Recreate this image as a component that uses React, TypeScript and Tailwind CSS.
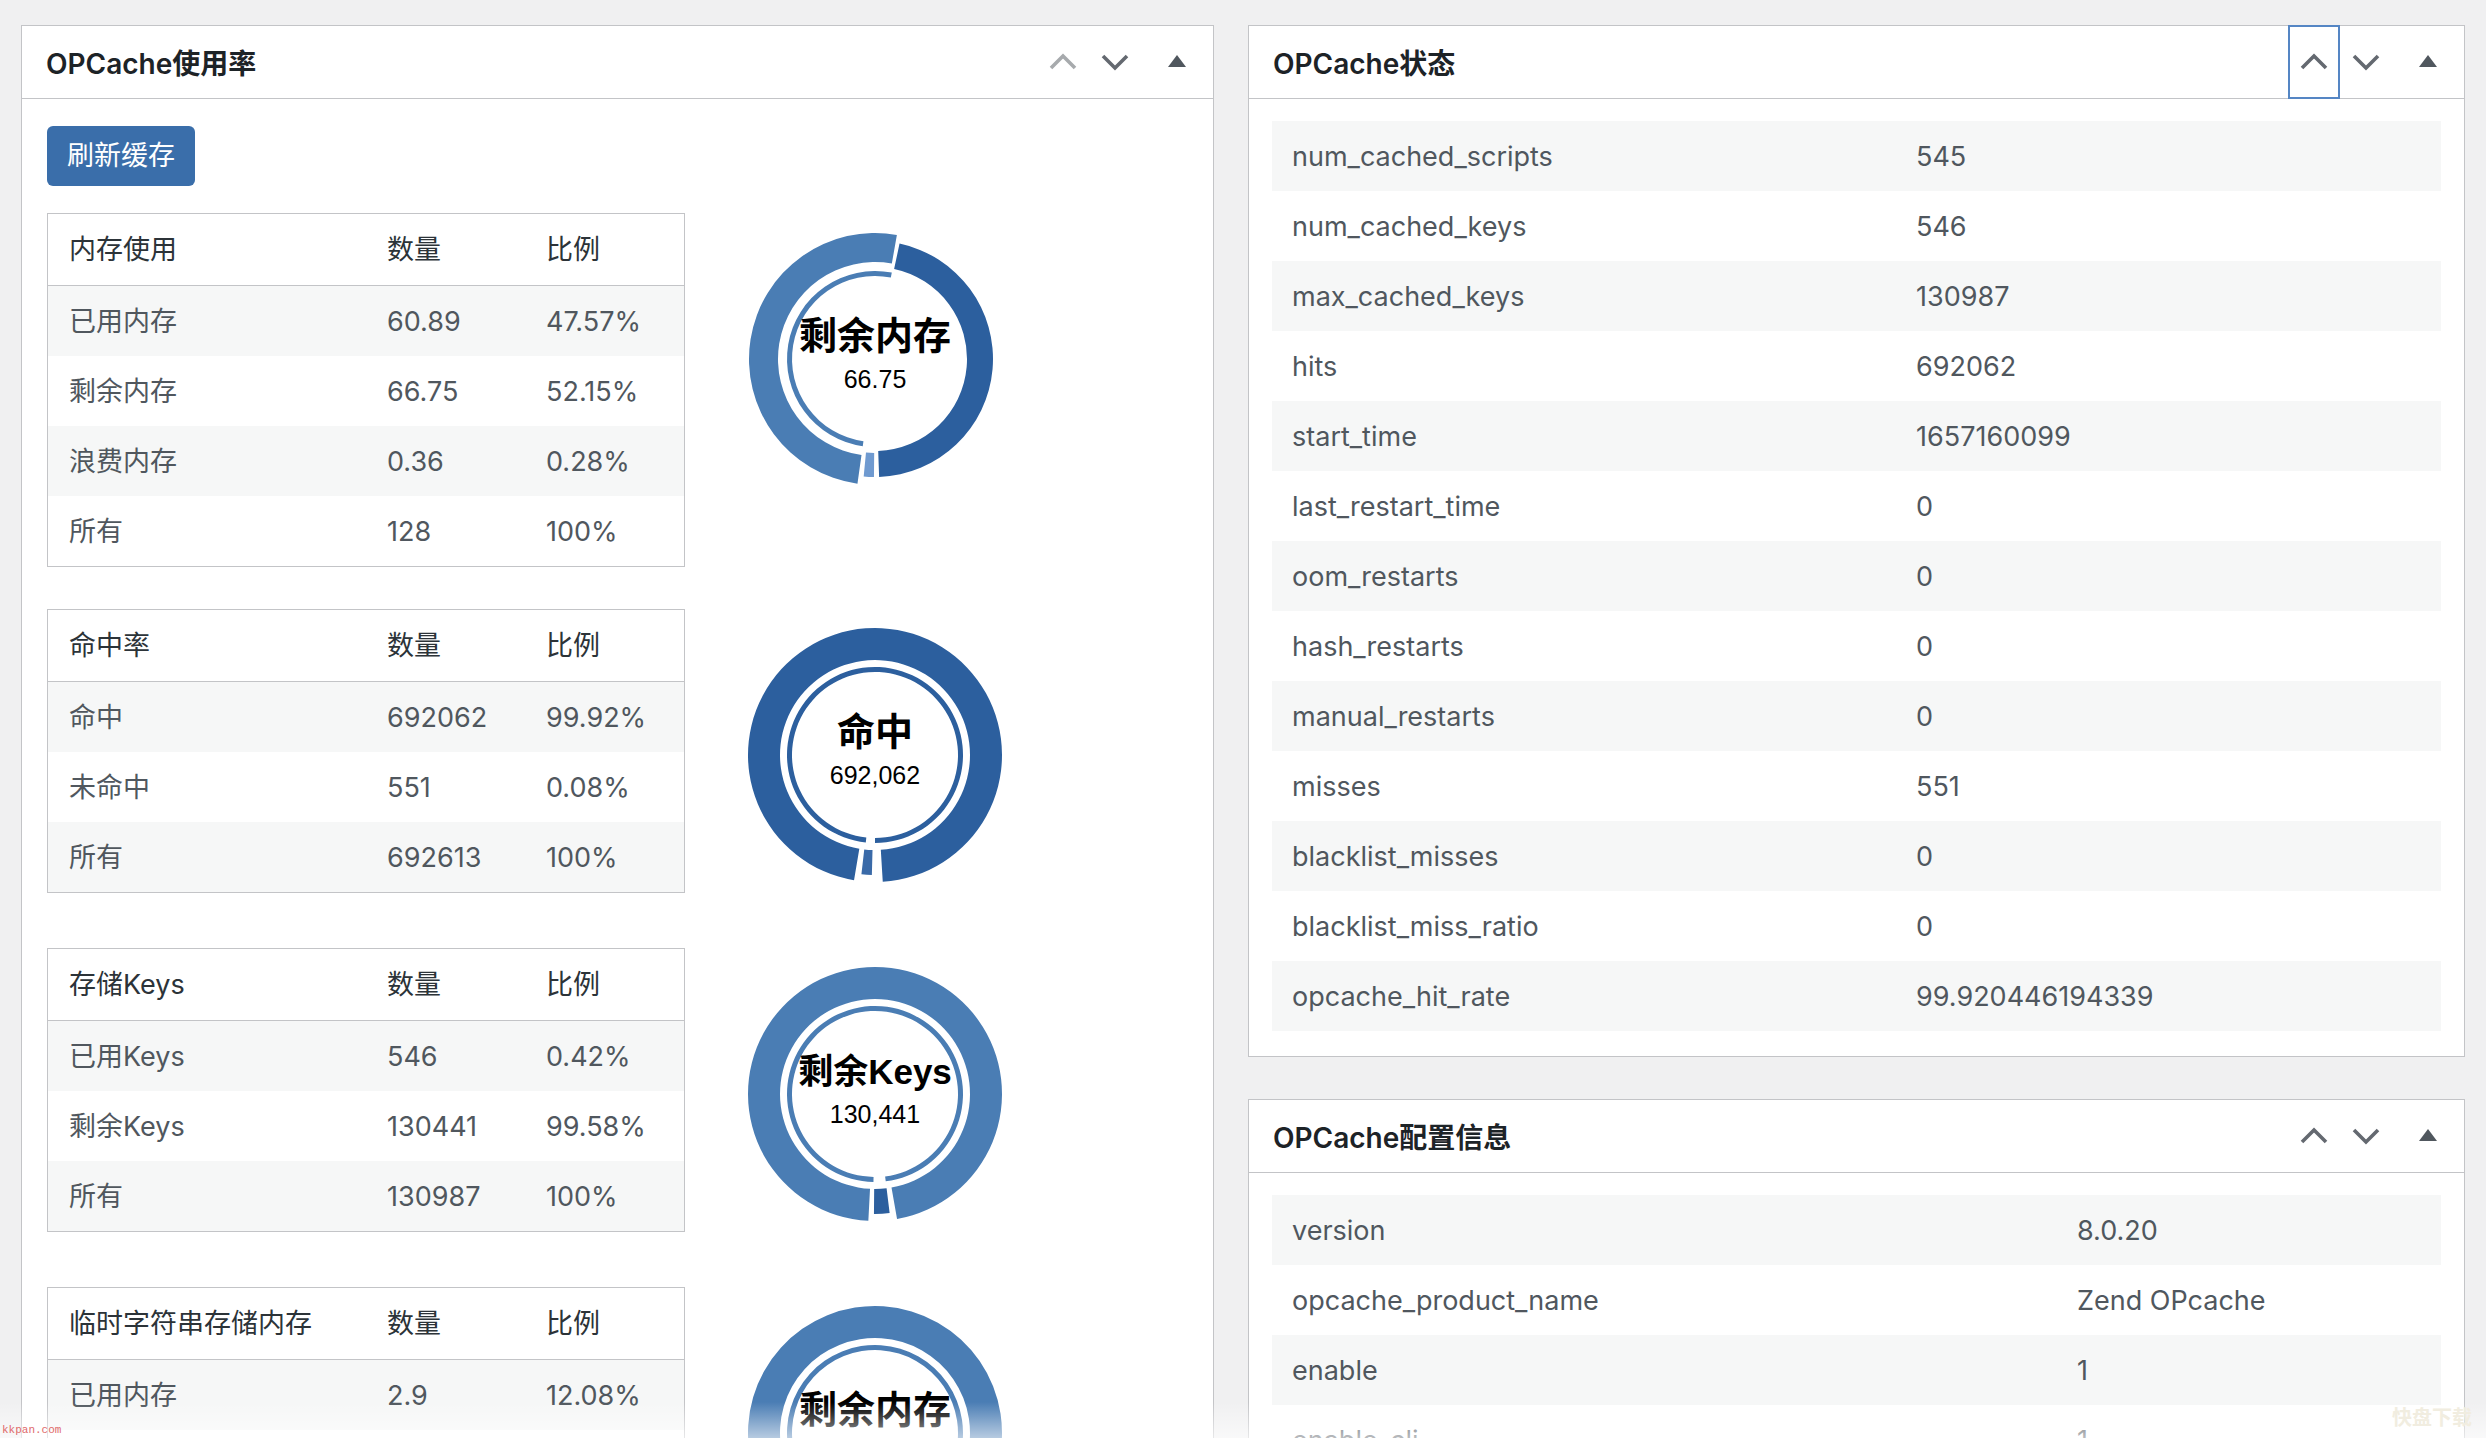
import React from "react";

const FONT = "font-['Inter','Noto_Sans_CJK_SC',sans-serif]";
const DARK = "#2c5f9e";
const LIGHT = "#4a7db4";

function Chevron({ up, color }: { up?: boolean; color: string }) {
  return (
    <svg width="28" height="18" viewBox="0 0 28 18" fill="none">
      <polyline
        points={up ? "2,15 14,3 26,15" : "2,3 14,15 26,3"}
        stroke={color}
        strokeWidth="3.6"
        strokeLinecap="butt"
        strokeLinejoin="miter"
      />
    </svg>
  );
}

function Triangle() {
  return (
    <svg width="20" height="14" viewBox="0 0 20 14">
      <polygon points="10,1 19,13 1,13" fill="#50575e" />
    </svg>
  );
}

function PanelHeader({ title, upColor, focused }: { title: string; upColor: string; focused?: boolean }) {
  return (
    <div className="flex h-[73px] items-center justify-between border-b border-[#c3c4c7]">
      <h2 className="pl-[24px] pt-[3px] text-[28px] font-semibold text-[#1d2327] leading-none">{title}</h2>
      <div className="flex h-full">
        <div className="relative flex h-full w-[52px] items-center justify-center">
          {focused && (
            <span className="pointer-events-none absolute -top-px -bottom-px left-0 right-0 border-2 border-[#5586c4]" />
          )}
          <Chevron up color={upColor} />
        </div>
        <div className="flex h-full w-[52px] items-center justify-center">
          <Chevron color="#646970" />
        </div>
        <div className="flex h-full w-[72px] items-center justify-center pb-[3px]">
          <Triangle />
        </div>
      </div>
    </div>
  );
}

function polar(cx: number, cy: number, r: number, deg: number) {
  const a = ((deg - 90) * Math.PI) / 180;
  return [cx + r * Math.cos(a), cy + r * Math.sin(a)];
}

function arc(cx: number, cy: number, ro: number, ri: number, s: number, e: number) {
  const large = e - s > 180 ? 1 : 0;
  const [x1, y1] = polar(cx, cy, ro, s);
  const [x2, y2] = polar(cx, cy, ro, e);
  const [x3, y3] = polar(cx, cy, ri, e);
  const [x4, y4] = polar(cx, cy, ri, s);
  return `M${x1} ${y1} A${ro} ${ro} 0 ${large} 1 ${x2} ${y2} L${x3} ${y3} A${ri} ${ri} 0 ${large} 0 ${x4} ${y4} Z`;
}

type Seg = { s: number; e: number; ro: number; ri: number; c: string };

function Donut({ segs, title, value, titleSize = 38 }: { segs: Seg[]; title: string; value: string; titleSize?: number }) {
  const cx = 148;
  const cy = 146;
  return (
    <svg width="300" height="297" viewBox="0 0 300 297" className="ml-[42px] shrink-0">
      {segs.map((g, i) => (
        <path key={i} d={arc(cx, cy, g.ro, g.ri, g.s, g.e)} fill={g.c} />
      ))}
      <text
        x={cx}
        y={cy - 23}
        textAnchor="middle"
        dominantBaseline="central"
        fontFamily="'Liberation Sans','Noto Sans CJK SC',sans-serif"
        fontWeight="700"
        fontSize={titleSize}
        fill="#000"
      >
        {title}
      </text>
      <text
        x={cx}
        y={cy + 20}
        textAnchor="middle"
        dominantBaseline="central"
        fontFamily="'Liberation Sans','Noto Sans CJK SC',sans-serif"
        fontSize="25"
        fill="#000"
      >
        {value}
      </text>
    </svg>
  );
}

function StatTable({ head, rows }: { head: string; rows: string[][] }) {
  return (
    <div className="w-[638px] shrink-0 border border-[#c3c4c7] bg-white">
      <div className="flex h-[72px] items-center border-b border-[#c3c4c7] pt-[2px] text-[27px] text-[#2c3338]">
        <div className="w-[318px] pl-[21px]">{head}</div>
        <div className="w-[159px] pl-[21px]">数量</div>
        <div className="w-[159px] pl-[21px]">比例</div>
      </div>
      {rows.map((r, i) => (
        <div
          key={i}
          className={`flex h-[70px] items-center pt-[2px] text-[27px] text-[#50575e] ${i % 2 === 0 ? "bg-[#f6f7f7]" : "bg-white"}`}
        >
          <div className="w-[318px] pl-[21px]">{r[0]}</div>
          <div className="w-[159px] pl-[21px]">{r[1]}</div>
          <div className="w-[159px] pl-[21px]">{r[2]}</div>
        </div>
      ))}
    </div>
  );
}

function KVTable({ rows, labelWidth }: { rows: string[][]; labelWidth: string }) {
  return (
    <div className="flex flex-col">
      {rows.map((r, i) => (
        <div
          key={i}
          className={`flex h-[70px] shrink-0 items-center pt-[2px] text-[27px] text-[#50575e] ${i % 2 === 0 ? "bg-[#f6f7f7]" : "bg-white"}`}
        >
          <div className={`${labelWidth} pl-[20px]`}>{r[0]}</div>
          <div className="pl-[20px]">{r[1]}</div>
        </div>
      ))}
    </div>
  );
}

const statusRows = [
  ["num_cached_scripts", "545"],
  ["num_cached_keys", "546"],
  ["max_cached_keys", "130987"],
  ["hits", "692062"],
  ["start_time", "1657160099"],
  ["last_restart_time", "0"],
  ["oom_restarts", "0"],
  ["hash_restarts", "0"],
  ["manual_restarts", "0"],
  ["misses", "551"],
  ["blacklist_misses", "0"],
  ["blacklist_miss_ratio", "0"],
  ["opcache_hit_rate", "99.920446194339"],
];

const configRows = [
  ["version", "8.0.20"],
  ["opcache_product_name", "Zend OPcache"],
  ["enable", "1"],
  ["enable_cli", "1"],
  ["use_cwd", "1"],
];

export default function App() {
  return (
    <div className={`relative h-[1438px] w-[2486px] overflow-hidden bg-[#f0f0f1] ${FONT}`}>
      <div className="flex items-start gap-[34px] pl-[21px] pt-[25px]">
        {/* Left panel */}
        <div className="w-[1193px] shrink-0 border border-[#c3c4c7] bg-white">
          <PanelHeader title="OPCache使用率" upColor="#a7aaad" />
          <div className="px-[25px] pt-[27px] pb-[40px]">
            <div className="flex h-[60px] w-[148px] items-center justify-center rounded-[6px] bg-[#3a6eaa] text-[27px] text-white">
              刷新缓存
            </div>
            <div className="mt-[27px] flex flex-col gap-[42px]">
              <div className="flex items-start">
                <StatTable
                  head="内存使用"
                  rows={[
                    ["已用内存", "60.89", "47.57%"],
                    ["剩余内存", "66.75", "52.15%"],
                    ["浪费内存", "0.36", "0.28%"],
                    ["所有", "128", "100%"],
                  ]}
                />
                <Donut
                  title="剩余内存"
                  value="66.75"
                  segs={[
                    { s: 188, e: 370, ro: 126, ri: 97, c: LIGHT },
                    { s: 372, e: 538, ro: 118, ri: 92, c: DARK },
                    { s: 180.5, e: 185.5, ro: 118, ri: 94, c: "#6f9ad0" },
                    { s: 188, e: 371, ro: 88, ri: 83, c: LIGHT },
                  ]}
                />
              </div>
              <div className="flex items-start">
                <StatTable
                  head="命中率"
                  rows={[
                    ["命中", "692062", "99.92%"],
                    ["未命中", "551", "0.08%"],
                    ["所有", "692613", "100%"],
                  ]}
                />
                <Donut
                  title="命中"
                  value="692,062"
                  segs={[
                    { s: 189.5, e: 536.5, ro: 127, ri: 95, c: DARK },
                    { s: 181.5, e: 186.5, ro: 120, ri: 95, c: "#3a6aa8" },
                    { s: 186, e: 540, ro: 88, ri: 83, c: DARK },
                  ]}
                />
              </div>
              <div className="flex items-start">
                <StatTable
                  head="存储Keys"
                  rows={[
                    ["已用Keys", "546", "0.42%"],
                    ["剩余Keys", "130441", "99.58%"],
                    ["所有", "130987", "100%"],
                  ]}
                />
                <Donut
                  title="剩余Keys"
                  value="130,441"
                  titleSize={35}
                  segs={[
                    { s: 183, e: 530, ro: 127, ri: 95, c: LIGHT },
                    { s: 173, e: 180.5, ro: 120, ri: 95, c: DARK },
                    { s: 181, e: 533, ro: 88, ri: 83, c: LIGHT },
                  ]}
                />
              </div>
              <div className="flex items-start">
                <StatTable
                  head="临时字符串存储内存"
                  rows={[
                    ["已用内存", "2.9", "12.08%"],
                    ["剩余内存", "21.1", "87.92%"],
                    ["所有", "24", "100%"],
                  ]}
                />
                <Donut
                  title="剩余内存"
                  value="21.1"
                  segs={[
                    { s: 183, e: 493, ro: 127, ri: 95, c: LIGHT },
                    { s: 135, e: 180.5, ro: 120, ri: 95, c: DARK },
                    { s: 183, e: 493, ro: 88, ri: 83, c: LIGHT },
                  ]}
                />
              </div>
            </div>
          </div>
        </div>

        {/* Right column */}
        <div className="flex w-[1217px] shrink-0 flex-col gap-[42px]">
          <div className="border border-[#c3c4c7] bg-white">
            <PanelHeader title="OPCache状态" upColor="#646970" focused />
            <div className="px-[23px] pt-[22px] pb-[25px]">
              <KVTable rows={statusRows} labelWidth="w-[624px]" />
            </div>
          </div>
          <div className="border border-[#c3c4c7] bg-white">
            <PanelHeader title="OPCache配置信息" upColor="#646970" />
            <div className="px-[23px] pt-[22px] pb-[25px]">
              <KVTable rows={configRows} labelWidth="w-[785px]" />
            </div>
          </div>
        </div>
      </div>

      {/* bottom fade overlay */}
      <div className="pointer-events-none absolute inset-x-0 bottom-0 h-[36px] bg-linear-to-b from-transparent to-white/60" />
      <div className="pointer-events-none absolute bottom-[2px] left-[2px] font-['Liberation_Mono',monospace] text-[11px] leading-none text-[#e06b6b]">
        kkpan.com
      </div>
      <div className="pointer-events-none absolute bottom-[10px] right-[14px] text-[20px] font-bold leading-none text-[#f1ede0]">
        快盘下载
      </div>
    </div>
  );
}
